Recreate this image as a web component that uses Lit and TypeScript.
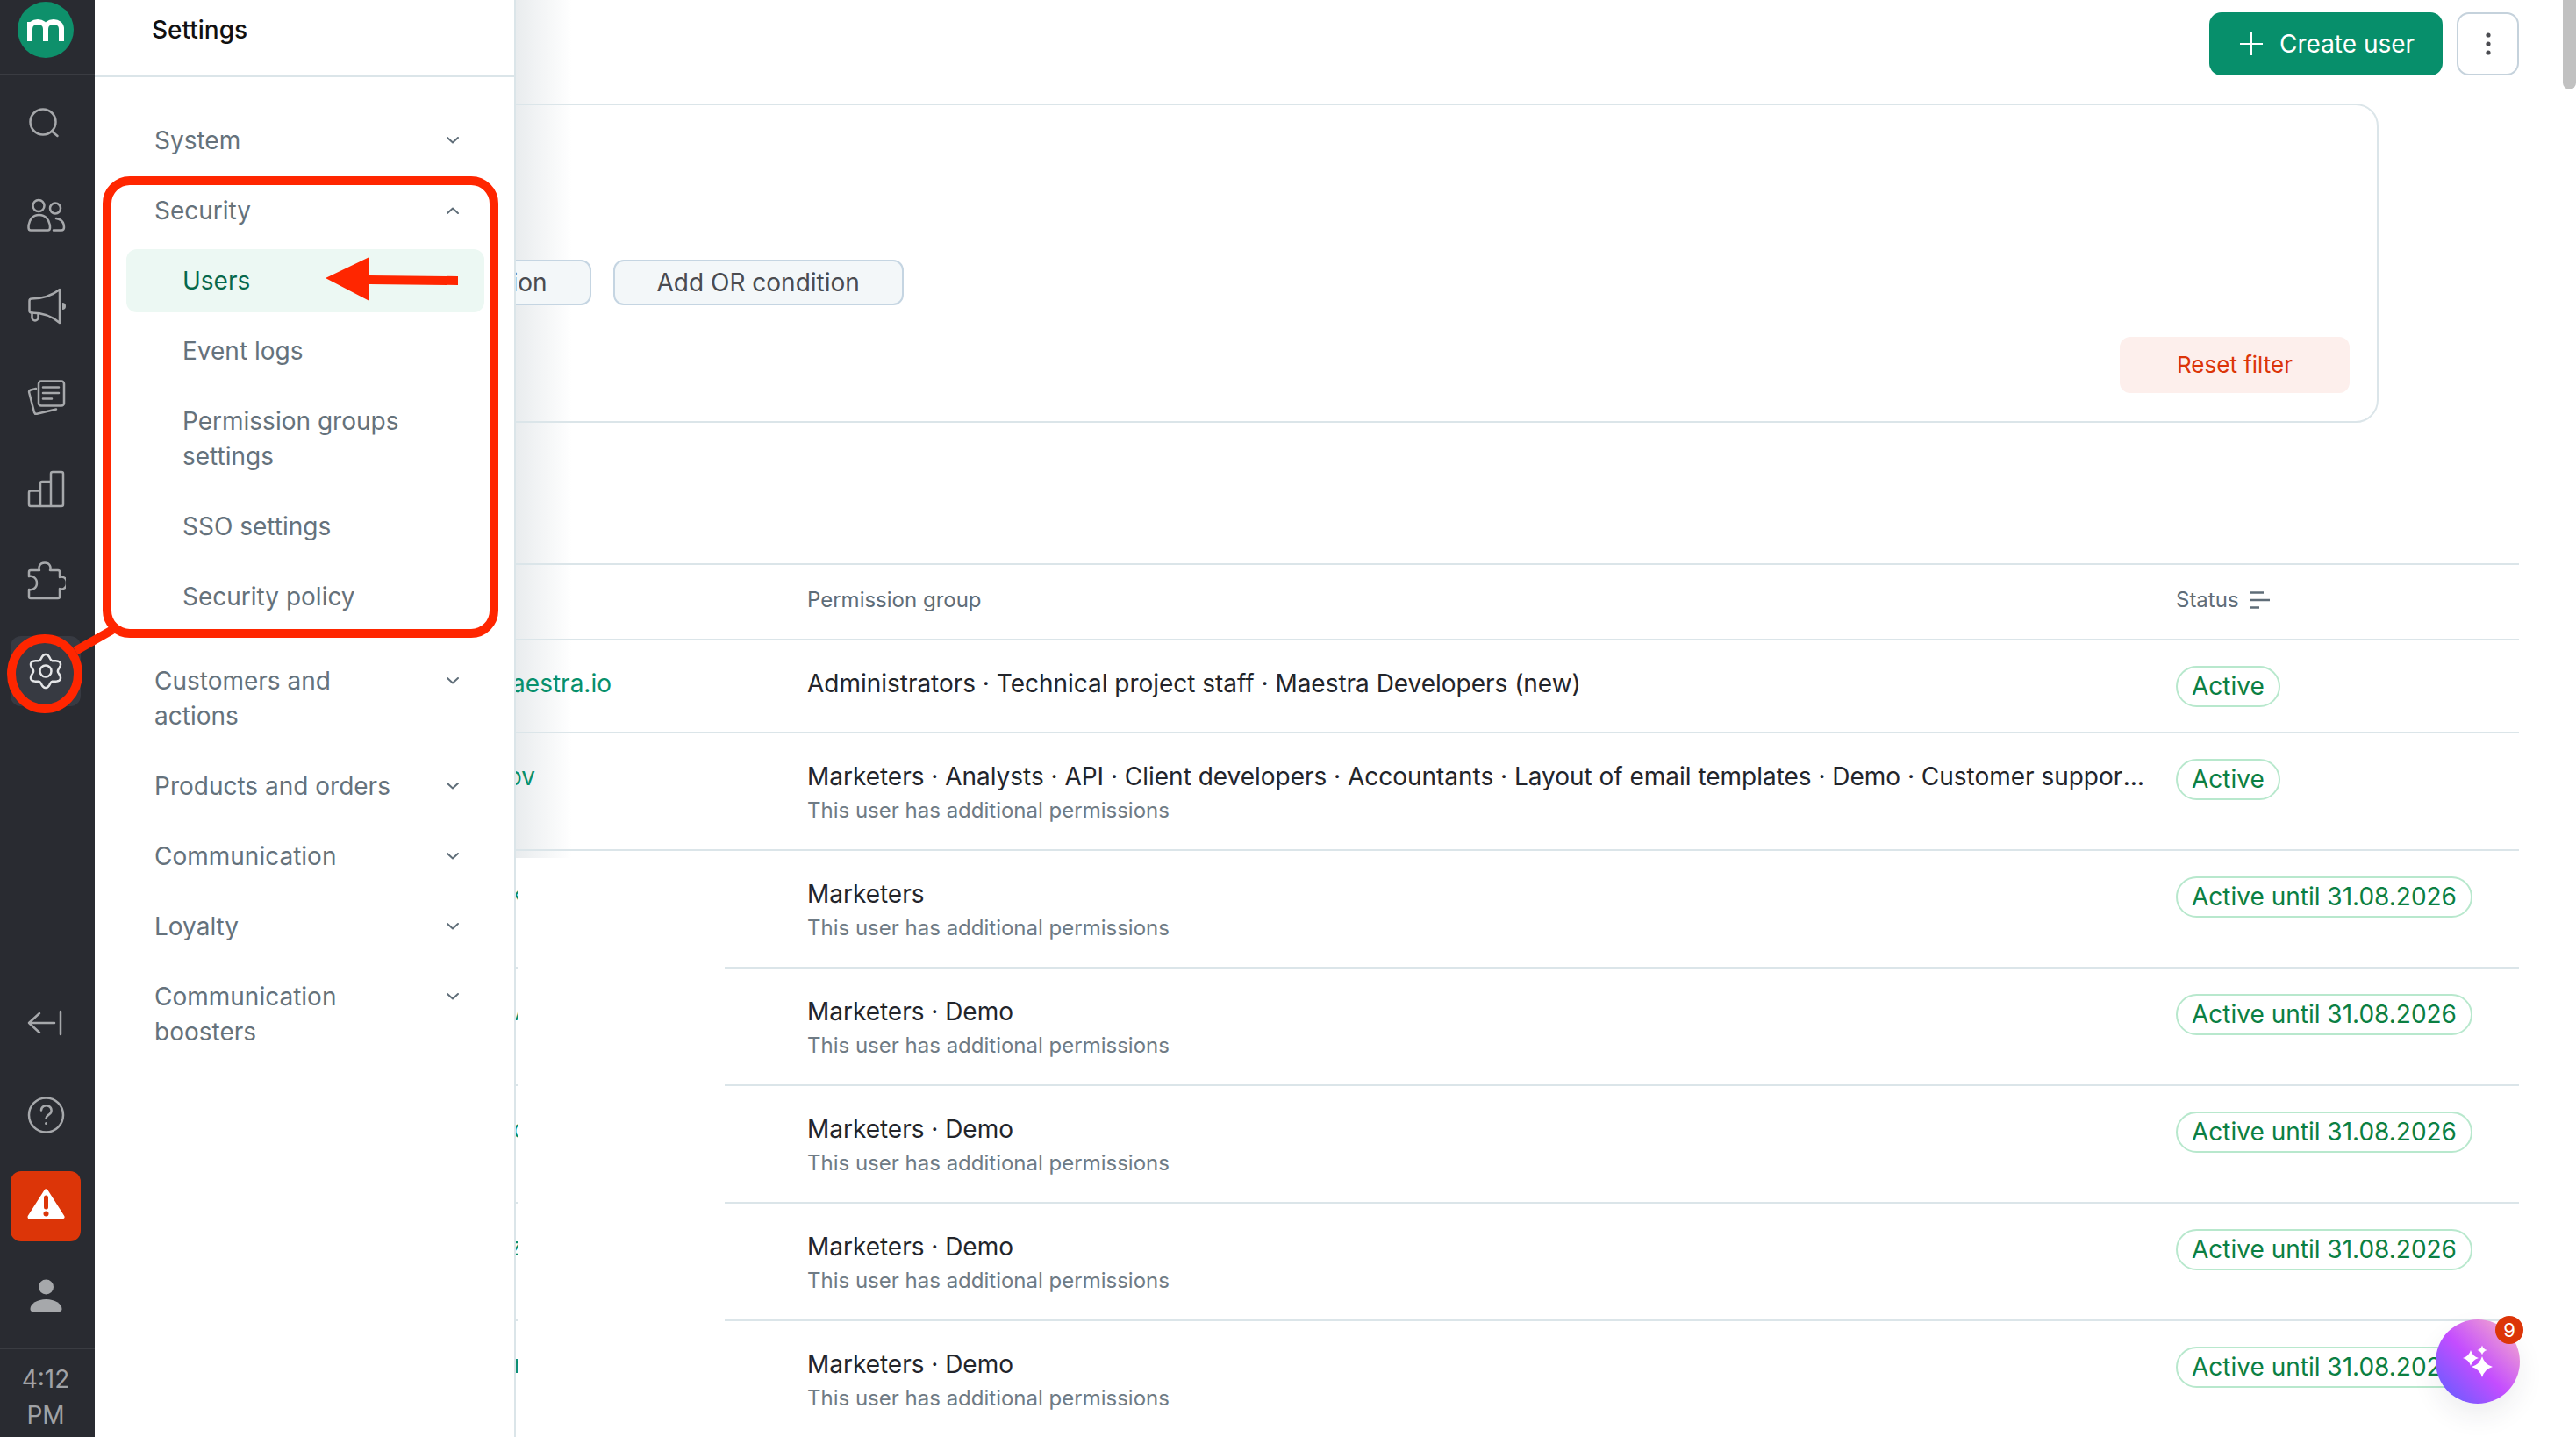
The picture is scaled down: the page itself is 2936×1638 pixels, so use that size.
import { LitElement, html, css, nothing } from 'lit';
import { customElement } from 'lit/decorators.js';

// 4-point sparkle, fat-waisted like the one in the assistant button
const star = (x: number, y: number, r: number) => {
  const c = r * 0.22;
  return `M${x} ${y - r}Q${x + c} ${y - c} ${x + r} ${y}Q${x + c} ${y + c} ${x} ${y + r}Q${x - c} ${y + c} ${x - r} ${y}Q${x - c} ${y - c} ${x} ${y - r}Z`;
};

// six-lobed settings gear outline
const gearPath = (() => {
  const pts: string[] = [];
  for (let i = 0; i < 120; i++) {
    const a = (i / 120) * Math.PI * 2;
    const r = 16.5 + 2.6 * Math.cos(6 * a);
    pts.push(`${(25 + r * Math.sin(a)).toFixed(2)} ${(24 - r * Math.cos(a)).toFixed(2)}`);
  }
  return 'M' + pts.join('L') + 'Z';
})();

const topIcons = [
  html`<svg class="ico" viewBox="0 0 48 48"><circle cx="22" cy="22" r="14.5"/><path d="M32 32.500l6.500 5.500"/></svg>`,
  html`<svg class="ico" viewBox="0 0 48 48"><circle cx="17" cy="13.5" r="6.5"/><path d="M5.5 38.5C5.5 29 11 24 17.5 24S30 29 30 38.5c0 2-1 3-2.5 3H8c-1.5 0-2.5-1-2.5-3z"/><circle cx="36" cy="16.5" r="6"/><path d="M34 41.5h9c2 0 3-1.5 3-3.5 0-5-3-9-9-10"/></svg>`,
  html`<svg class="ico" viewBox="0 0 48 48"><path d="M9 15.5C20 15.5 32 12 41 5v38C33 36 22 31.5 9 31.5c-2 0-2.500-1-2.500-2.500V18c0-1.500.5-2.500 2.500-2.500z"/><path d="M9.500 31.500V37a3.500 3.500 0 0 0 7 0v-4.500"/><path class="fill" d="M44 20a4 4 0 0 1 0 8z"/></svg>`,
  html`<svg class="ico" viewBox="0 0 48 48"><rect x="17" y="5.500" width="29" height="28" rx="3"/><path d="M22 12.500h18M22 19h18M22 25.500h10"/><path d="M14 14l-6 1.500c-1.500.5-2.200 1.500-1.800 3L12 41c.5 1.500 1.500 2 3 1.800L37 37.500"/></svg>`,
  html`<svg class="ico" viewBox="0 0 48 48"><path d="M8 44h35c1.200 0 2-.8 2-2V7c0-1.200-.8-2-2-2h-10c-1.200 0-2 .8-2 2v37M31 16H21c-1.200 0-2 .8-2 2v26M19 26.500H8c-1.200 0-2 .8-2 2V42c0 1.200.8 2 2 2"/></svg>`,
  html`<svg class="ico" viewBox="0 0 48 48"><path d="M8 13h10C17 11 17 4.500 24 4.500S31 11 30 13h9a2 2 0 0 1 2 2v6c2-1 8-.5 8 6.500S43 35 41 34v9a2 2 0 0 1-2 2H8a2 2 0 0 1-2-2v-8c3 1 9-1 9-7.500S9 19 6 20v-5a2 2 0 0 1 2-2z"/></svg>`,
];

const chevron = (up: boolean) => html`<svg class="chev" viewBox="0 0 14 8"><path d=${up ? 'M1 7l6-5.500L13 7' : 'M1 1l6 5.500L13 1'}/></svg>`;

type NavItem = { label: string; open?: boolean; spaced?: boolean; subs?: { label: string; active?: boolean }[] };

const NAV: NavItem[] = [
  { label: 'System' },
  {
    label: 'Security',
    open: true,
    subs: [
      { label: 'Users', active: true },
      { label: 'Event logs' },
      { label: 'Permission groups settings' },
      { label: 'SSO settings' },
      { label: 'Security policy' },
    ],
  },
  { label: 'Customers and actions', spaced: true },
  { label: 'Products and orders' },
  { label: 'Communication' },
  { label: 'Loyalty' },
  { label: 'Communication boosters' },
];

type Row = { email: string; emailEnd: number; groups: string; extra: boolean; status: string };

const UNTIL = 'Active until 31.08.2026';
const EXTRA_GROUPS =
  'Marketers · Analysts · API · Client developers · Accountants · Layout of email templates · Demo · Customer support · Managers';

const ROWS: Row[] = [
  { email: 'admin@maestra.io', emailEnd: 697, groups: 'Administrators · Technical project staff · Maestra Developers (new)', extra: false, status: 'Active' },
  { email: 'a.ivanov', emailEnd: 610, groups: EXTRA_GROUPS, extra: true, status: 'Active' },
  { email: 'k', emailEnd: 596, groups: 'Marketers', extra: true, status: UNTIL },
  { email: 'v', emailEnd: 596, groups: 'Marketers · Demo', extra: true, status: UNTIL },
  { email: 'o', emailEnd: 601, groups: 'Marketers · Demo', extra: true, status: UNTIL },
  { email: 'z', emailEnd: 596, groups: 'Marketers · Demo', extra: true, status: UNTIL },
  { email: 'r', emailEnd: 596, groups: 'Marketers · Demo', extra: true, status: UNTIL },
];

const EMAIL_COL_END = 880;

@customElement('app-root')
export class AppRoot extends LitElement {
  static styles = css`
    :host {
      display: block;
      position: relative;
      width: 2936px;
      height: 1638px;
      overflow: hidden;
      background: #fff;
      font-family: Inter, 'Liberation Sans', sans-serif;
      font-size: 28px;
      line-height: 40px;
      color: #23252b;
    }
    * { box-sizing: border-box; }
    .shell { display: flex; height: 100%; }

    /* ── left rail ─────────────────────────── */
    .rail {
      flex: 0 0 108px;
      display: flex;
      flex-direction: column;
      background: #292b31;
      position: relative;
      z-index: 3;
    }
    .logo {
      height: 86px;
      border-bottom: 2px solid #3a3c42;
      padding: 2px 0 0 20px;
    }
    .logo svg { width: 64px; height: 64px; display: block; }
    .rail-top { display: flex; flex-direction: column; gap: 24px; padding: 15px 0 0 12px; }
    .rail-bottom { margin-top: auto; display: flex; flex-direction: column; gap: 24px; padding: 0 0 17px 12px; }
    .rail-btn {
      width: 80px;
      height: 80px;
      border-radius: 12px;
      display: flex;
      align-items: center;
      justify-content: center;
    }
    .rail-btn.current { background: #373a42; }
    .rail-btn.alert { background: #dc3508; }
    .ico { width: 48px; height: 48px; margin-left: -2px; fill: none; stroke: #a6a8ab; stroke-width: 2.5; stroke-linecap: round; stroke-linejoin: round; }
    .ico .fill { fill: #a6a8ab; stroke: none; }
    .ico.solid { stroke: none; }
    .current .ico { stroke: #e4e5e7; }
    .clock {
      height: 102px;
      border-top: 2px solid #3a3c42;
      text-align: center;
      color: #a0a2a6;
      padding: 14px 4px 0 0;
      line-height: 41px;
      font-size: 28px;
    }

    /* ── flyout panel ──────────────────────── */
    .panel {
      position: absolute;
      left: 108px;
      top: 0;
      bottom: 0;
      width: 480px;
      background: #fff;
      border-right: 2px solid #dbe5e9;
      z-index: 2;
    }
    .panel-head {
      height: 88px;
      border-bottom: 2px solid #dbe5e9;
      padding: 14px 0 0 65px;
      font-weight: 500;
      color: #111;
    }
    .nav { padding-top: 32px; color: #65727c; }
    .nav-item { display: flex; justify-content: space-between; padding: 20px 63px 20px 68px; }
    .nav-item.spaced { margin-top: 16px; }
    .nav-label { max-width: 280px; }
    .chev { width: 14px; height: 8px; margin-top: 16px; fill: none; stroke: #5f6d78; stroke-width: 2; stroke-linecap: round; stroke-linejoin: round; }
    .subs { display: flex; flex-direction: column; gap: 8px; padding: 4px 34px 4px 35.5px; }
    .sub { padding: 16px 40px 16px 64.5px; border-radius: 12px; }
    .sub.active { background: #ecf8f3; color: #07684c; }

    /* what lies right of the flyout: its shadow and the blanked-out column */
    .panel-shade {
      position: absolute;
      left: 588px;
      top: 0;
      width: 64px;
      height: 978px;
      background: linear-gradient(90deg, #e9ecee, rgba(255, 255, 255, 0));
    }
    .blank {
      position: absolute;
      left: 590px;
      top: 978px;
      width: 236px;
      bottom: 0;
      background: #fff;
      z-index: 1;
    }

    /* ── main column ───────────────────────── */
    .main { flex: 1; min-width: 0; padding: 14px 65px 0 40px; position: relative; z-index: 1; }
    .toolbar { display: flex; justify-content: flex-end; gap: 16px; height: 72px; }
    .btn-create {
      width: 266px;
      height: 72px;
      border-radius: 14px;
      background: #078f6b;
      color: #fff;
      display: flex;
      align-items: center;
      gap: 19px;
      padding-left: 35px;
    }
    .btn-create svg { width: 26px; height: 26px; stroke: #fff; stroke-width: 2; fill: none; }
    .btn-more {
      width: 71px;
      height: 72px;
      border: 2px solid #c5d2dc;
      border-radius: 14px;
      display: flex;
      align-items: center;
      justify-content: center;
    }
    .btn-more svg { width: 8px; height: 30px; fill: #4a4b50; }

    .filter {
      margin: 32px 160px 0 0;
      height: 364px;
      border: 2px solid #dbe5e9;
      border-radius: 26px;
      padding: 176px 31px 0 171px;
    }
    .conditions { display: flex; gap: 25px; }
    .cond {
      height: 52px;
      padding: 0 48px;
      border: 2px solid #c5d5e2;
      border-radius: 12px;
      background: #f3f7f9;
      color: #4a4b50;
      display: flex;
      align-items: center;
    }
    .filter-foot { display: flex; justify-content: flex-end; margin-top: 36px; }
    .reset {
      width: 262px;
      height: 64px;
      border-radius: 12px;
      background: #fdefec;
      color: #dc3508;
      font-size: 26px;
      display: flex;
      align-items: center;
      justify-content: center;
    }

    .table { margin-top: 160px; }
    .row {
      display: grid;
      grid-template-columns: 732px 1520px 391px;
      column-gap: 40px;
      align-items: start;
      border-top: 2px solid #dbe5e9;
      padding: 29px 0 28px;
    }
    .row.extra { padding-bottom: 25px; }
    .row.head {
      padding: 25px 0 29px;
      font-size: 24px;
      line-height: 30px;
      color: #5f6d78;
    }
    .status-head { display: flex; align-items: center; gap: 13px; }
    .status-head svg { width: 22px; height: 20px; stroke: #5f6d78; stroke-width: 2.500; fill: none; }
    .email { text-align: right; color: #078f6b; white-space: nowrap; }
    .groups { white-space: nowrap; overflow: hidden; text-overflow: ellipsis; margin-right: -7px; letter-spacing: -0.02px; }
    .note { font-size: 24px; line-height: 38px; color: #6f7b85; }
    .pill {
      display: inline-block;
      height: 47px;
      line-height: 43px;
      padding: 0 16px;
      border: 2px solid #b8e8cd;
      border-radius: 24px;
      color: #0b7f43;
      white-space: nowrap;
      background: #fff;
    }

    /* ── floating bits ─────────────────────── */
    .scroll-thumb {
      position: absolute;
      top: 0;
      right: 0;
      width: 15px;
      height: 102px;
      background: #c1c1c1;
      border-radius: 0 0 8px 8px;
      z-index: 4;
    }
    .assistant {
      position: absolute;
      left: 2776px;
      top: 1504px;
      width: 96px;
      height: 96px;
      border-radius: 50%;
      background: linear-gradient(45deg, #6a5cff 8%, #c44dff 48%, #f4a9cc 92%);
      box-shadow: 0 14px 30px rgba(40, 40, 60, 0.08);
      z-index: 4;
    }
    .assistant svg { width: 96px; height: 96px; fill: #fff; display: block; }
    .badge {
      position: absolute;
      top: -4px;
      right: -4px;
      width: 32px;
      height: 32px;
      border-radius: 50%;
      background: #dc3508;
      color: #fff;
      font-size: 22px;
      line-height: 32px;
      text-align: center;
    }
    .marks { position: absolute; left: 0; top: 0; width: 2936px; height: 1638px; pointer-events: none; z-index: 5; }
  `;

  private renderRail() {
    return html`
      <div class="rail">
        <div class="logo">
          <svg viewBox="0 0 64 64">
            <circle cx="32" cy="32" r="32" fill="#0e906b"/>
            <path d="M14 45V23M14 31c0-5 4-8 9-8s9 3 9 8v14M32 31c0-5 4-8 9-8s9 3 9 8v14" fill="none" stroke="#fff" stroke-width="6"/>
          </svg>
        </div>
        <div class="rail-top">
          ${topIcons.map((i) => html`<div class="rail-btn">${i}</div>`)}
          <div class="rail-btn current">
            <svg class="ico" viewBox="0 0 48 48"><path d=${gearPath}/><circle cx="25" cy="24" r="6.500"/></svg>
          </div>
        </div>
        <div class="rail-bottom">
          <div class="rail-btn">
            <svg class="ico" viewBox="0 0 48 48"><path d="M6 23h29M18 12L6 23l12 11M42 10v26"/></svg>
          </div>
          <div class="rail-btn">
            <svg class="ico" viewBox="0 0 48 48"><circle cx="25.500" cy="24" r="19.500"/><path d="M20 18.500a5.800 5.500 0 1 1 9 4.800c-2.200 1.400-3.500 2.200-3.500 4.500"/><circle class="fill" cx="25.500" cy="33.500" r="1.500"/></svg>
          </div>
          <div class="rail-btn alert">
            <svg class="ico solid" viewBox="0 0 48 48">
              <path d="M25.500 7L44 36H7z" fill="#fff" stroke="#fff" stroke-width="5" stroke-linejoin="round"/>
              <path d="M25.500 14v11" stroke="#dc3508" stroke-width="5" stroke-linecap="round"/>
              <circle cx="25.500" cy="32.500" r="3" fill="#dc3508"/>
            </svg>
          </div>
          <div class="rail-btn">
            <svg class="ico solid" viewBox="0 0 48 48">
              <circle cx="25.500" cy="12" r="8.500" fill="#a6a8ab"/>
              <path d="M7.500 37c0-6 8-11 18-11s18 5 18 11c0 2-1 3-2.500 3H10c-1.500 0-2.500-1-2.500-3z" fill="#a6a8ab"/>
            </svg>
          </div>
        </div>
        <div class="clock">4:12<br />PM</div>
      </div>
    `;
  }

  private renderPanel() {
    return html`
      <div class="panel">
        <div class="panel-head">Settings</div>
        <div class="nav">
          ${NAV.map(
            (n) => html`
              <div class="nav-item ${n.spaced ? 'spaced' : ''}">
                <span class="nav-label">${n.label}</span>${chevron(!!n.open)}
              </div>
              ${n.subs
                ? html`<div class="subs">
                    ${n.subs.map((s) => html`<div class="sub ${s.active ? 'active' : ''}">${s.label}</div>`)}
                  </div>`
                : nothing}
            `,
          )}
        </div>
      </div>
    `;
  }

  private renderRow(r: Row) {
    return html`
      <div class="row ${r.extra ? 'extra' : ''}">
        <div class="email" style="padding-right:${EMAIL_COL_END - r.emailEnd}px">${r.email}</div>
        <div>
          <div class="groups">${r.groups}</div>
          ${r.extra ? html`<div class="note">This user has additional permissions</div>` : nothing}
        </div>
        <div><span class="pill">${r.status}</span></div>
      </div>
    `;
  }

  render() {
    return html`
      <div class="panel-shade"></div>
      <div class="shell">
        ${this.renderRail()}
        <div class="main">
          <div class="toolbar">
            <div class="btn-create">
              <svg viewBox="0 0 26 26"><path d="M13 0v26M0 13h26"/></svg>
              Create user
            </div>
            <div class="btn-more">
              <svg viewBox="0 0 8 30"><circle cx="4" cy="5" r="2.600"/><circle cx="4" cy="15" r="2.600"/><circle cx="4" cy="25" r="2.600"/></svg>
            </div>
          </div>
          <div class="filter">
            <div class="conditions">
              <div class="cond">Add AND condition</div>
              <div class="cond">Add OR condition</div>
            </div>
            <div class="filter-foot"><div class="reset">Reset filter</div></div>
          </div>
          <div class="table">
            <div class="row head">
              <div class="email"></div>
              <div>Permission group</div>
              <div class="status-head">
                Status
                <svg viewBox="0 0 22 20"><path d="M0 1.500h15M0 10h22M0 18.500h10"/></svg>
              </div>
            </div>
            ${ROWS.map((r) => this.renderRow(r))}
          </div>
        </div>
      </div>
      <div class="blank"></div>
      ${this.renderPanel()}
      <div class="scroll-thumb"></div>
      <div class="assistant">
        <svg viewBox="0 0 96 96">
          <path d=${star(53, 54, 12)}/><path d=${star(40, 44, 9)}/><path d=${star(53, 35, 5.5)}/>
        </svg>
        <div class="badge">9</div>
      </div>
      <svg class="marks" viewBox="0 0 2936 1638">
        <g fill="none" stroke="#ff2600" stroke-width="10">
          <rect x="122" y="206" width="441" height="516" rx="26"/>
          <ellipse cx="51" cy="768" rx="38" ry="40"/>
          <path d="M86 742l42-24"/>
        </g>
        <path d="M371 317L421 293V314L522 315V325L421 324V343Z" fill="#ff2600"/>
      </svg>
    `;
  }
}
